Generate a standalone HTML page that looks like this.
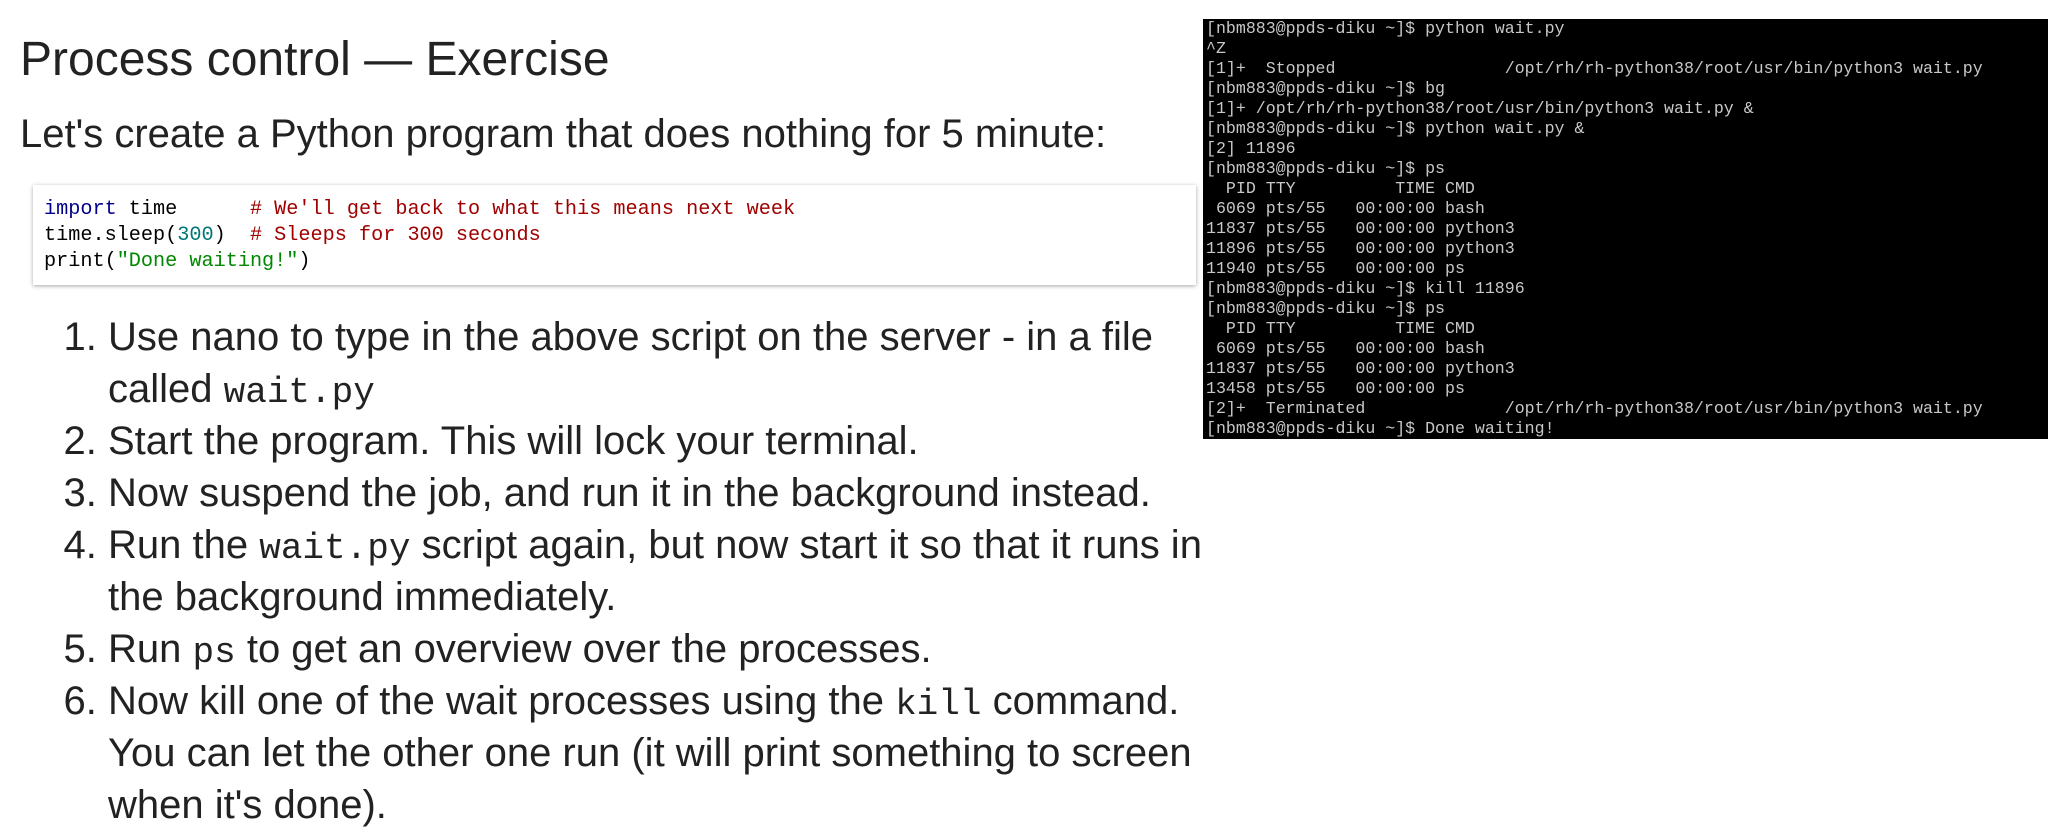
<!DOCTYPE html>
<html><head><meta charset="utf-8"><style>
body{margin:0;width:2048px;height:833px;background:#fff;position:relative;overflow:hidden;font-family:"Liberation Sans",sans-serif;color:#222}
h1{position:absolute;left:20px;top:30px;margin:0;font-weight:normal;font-size:48px;line-height:60px}
.sub{position:absolute;left:20px;top:110px;font-size:40px;line-height:48px}
.code{position:absolute;left:33px;top:185px;width:1163px;height:100px;box-sizing:border-box;background:#fff;box-shadow:0 1px 4px rgba(0,0,0,.35);padding:12px 0 0 11px;font-family:"Liberation Mono",monospace;font-size:20.2px;line-height:26px;white-space:pre;color:#000}
.k{color:#00008b}.c{color:#a00000}.n{color:#007777}.s{color:#008800}
ol{position:absolute;left:0;top:311px;margin:0;padding-left:108px;width:1112px;font-size:40px;line-height:52px;color:#222}
tt{font-family:"Liberation Mono",monospace;font-size:36px;line-height:1}
.term{position:absolute;left:1203px;top:19px;width:845px;height:420px;background:#000;color:#c8c8c8;font-family:"Liberation Mono",monospace;font-size:16.6px;line-height:20px;white-space:pre;padding-left:3px;box-sizing:border-box}
</style></head><body>
<h1>Process control — Exercise</h1>
<div class="sub">Let's create a Python program that does nothing for 5 minute:</div>
<div class="code"><span class="k">import</span> time      <span class="c"># We'll get back to what this means next week</span>
time.sleep(<span class="n">300</span>)  <span class="c"># Sleeps for 300 seconds</span>
print(<span class="s">"Done waiting!"</span>)</div>
<ol>
<li>Use nano to type in the above script on the server - in a file called <tt>wait.py</tt></li>
<li>Start the program. This will lock your terminal.</li>
<li>Now suspend the job, and run it in the background instead.</li>
<li>Run the <tt>wait.py</tt> script again, but now start it so that it runs in the background immediately.</li>
<li>Run <tt>ps</tt> to get an overview over the processes.</li>
<li>Now kill one of the wait processes using the <tt>kill</tt> command. You can let the other one run (it will print something to screen when it's done).</li>
</ol>
<div class="term">[nbm883@ppds-diku ~]$ python wait.py
^Z
[1]+  Stopped                 /opt/rh/rh-python38/root/usr/bin/python3 wait.py
[nbm883@ppds-diku ~]$ bg
[1]+ /opt/rh/rh-python38/root/usr/bin/python3 wait.py &amp;
[nbm883@ppds-diku ~]$ python wait.py &amp;
[2] 11896
[nbm883@ppds-diku ~]$ ps
  PID TTY          TIME CMD
 6069 pts/55   00:00:00 bash
11837 pts/55   00:00:00 python3
11896 pts/55   00:00:00 python3
11940 pts/55   00:00:00 ps
[nbm883@ppds-diku ~]$ kill 11896
[nbm883@ppds-diku ~]$ ps
  PID TTY          TIME CMD
 6069 pts/55   00:00:00 bash
11837 pts/55   00:00:00 python3
13458 pts/55   00:00:00 ps
[2]+  Terminated              /opt/rh/rh-python38/root/usr/bin/python3 wait.py
[nbm883@ppds-diku ~]$ Done waiting!</div>
</body></html>
